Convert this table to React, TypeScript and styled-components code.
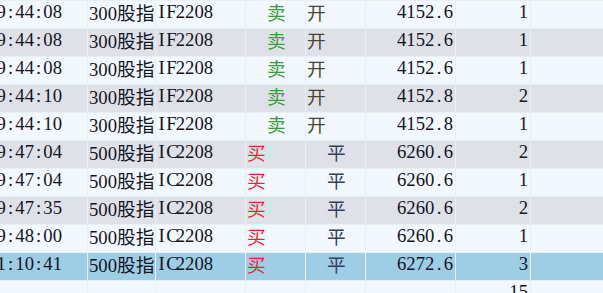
import React from "react";
import styled, { createGlobalStyle } from "styled-components";

const Global = createGlobalStyle`
  html, body { margin: 0; padding: 0; background: #f2f8ff; overflow: hidden; }
  body { width: 603px; height: 293px; }
`;

type Row = {
  time: string;
  name: string;
  code: string;
  side: "买" | "卖";
  open: "开" | "平";
  price: string;
  qty: string;
};

const rows: Row[] = [
  { time: "09:44:08", name: "300股指", code: "IF2208", side: "卖", open: "开", price: "4152.6", qty: "1" },
  { time: "09:44:08", name: "300股指", code: "IF2208", side: "卖", open: "开", price: "4152.6", qty: "1" },
  { time: "09:44:08", name: "300股指", code: "IF2208", side: "卖", open: "开", price: "4152.6", qty: "1" },
  { time: "09:44:10", name: "300股指", code: "IF2208", side: "卖", open: "开", price: "4152.8", qty: "2" },
  { time: "09:44:10", name: "300股指", code: "IF2208", side: "卖", open: "开", price: "4152.8", qty: "1" },
  { time: "09:47:04", name: "500股指", code: "IC2208", side: "买", open: "平", price: "6260.6", qty: "2" },
  { time: "09:47:04", name: "500股指", code: "IC2208", side: "买", open: "平", price: "6260.6", qty: "1" },
  { time: "09:47:35", name: "500股指", code: "IC2208", side: "买", open: "平", price: "6260.6", qty: "2" },
  { time: "09:48:00", name: "500股指", code: "IC2208", side: "买", open: "平", price: "6260.6", qty: "1" },
  { time: "11:10:41", name: "500股指", code: "IC2208", side: "买", open: "平", price: "6272.6", qty: "3" },
];

const Table = styled.div`
  width: 603px;
  height: 293px;
  overflow: hidden;
  background: #ebeef2;
  display: flex;
  flex-direction: column;
  gap: 1px;
  padding-top: 1px;
  box-sizing: border-box;
  font-family: "Liberation Serif", "Noto Sans CJK SC", serif;
  font-size: 18.7px;
  color: #14141e;
`;

const RowBox = styled.div<{ $tone: "light" | "gray" | "sel" }>`
  display: grid;
  grid-template-columns: 87px 67px 89px 59px 59px 89px 74px 1fr;
  column-gap: 1px;
  height: 27px;
  flex: none;
  > * {
    background: ${(p) =>
      p.$tone === "sel" ? "#9ecde6" : p.$tone === "gray" ? "#dee2e8" : "#f2f8ff"};
  }
`;

const Cell = styled.div<{ $align?: "left" | "right"; $indent?: number }>`
  display: flex;
  justify-content: ${(p) => (p.$align === "right" ? "flex-end" : "flex-start")};
  overflow: hidden;
  white-space: nowrap;
  height: 27px;
  line-height: 22px;
  padding: 0 ${(p) => (p.$align === "right" ? "2px" : "0")} 5px
    ${(p) => (p.$align === "right" ? "0" : `${1 + (p.$indent ?? 0)}px`)};
  box-sizing: border-box;
`;

const TimeCell = styled(Cell)`
  justify-content: flex-end;
  padding-right: 25px;
`;

const Cjk = styled.span<{ $color?: string }>`
  font-family: "Noto Sans CJK SC", sans-serif;
  color: ${(p) => p.$color ?? "inherit"};
`;

const Half = styled.span`
  display: inline-block;
  width: 0.5em;
  text-align: center;
`;

/* Renders text with SimSun-like metrics: half-width ASCII cells, full-width CJK */
const Txt = ({ value, color }: { value: string; color?: string }) => {
  const parts: React.ReactNode[] = [];
  let cjk = "";
  const flush = () => {
    if (cjk) {
      parts.push(
        <Cjk key={parts.length} $color={color}>
          {cjk}
        </Cjk>
      );
      cjk = "";
    }
  };
  for (const ch of value) {
    if (ch.charCodeAt(0) < 128) {
      flush();
      parts.push(<Half key={parts.length}>{ch}</Half>);
    } else {
      cjk += ch;
    }
  }
  flush();
  return <span>{parts}</span>;
};

export default function App() {
  return (
    <>
      <Global />
      <Table>
        {rows.map((r, i) => (
          <RowBox key={i} $tone={i === rows.length - 1 ? "sel" : i % 2 ? "gray" : "light"}>
            <TimeCell>
              <Txt value={r.time} />
            </TimeCell>
            <Cell>
              <Txt value={r.name} />
            </Cell>
            <Cell>
              <Txt value={r.code} />
            </Cell>
            <Cell $indent={r.side === "卖" ? 20 : 0}>
              <Txt value={r.side} color={r.side === "卖" ? "#3a9c3a" : "#f0202a"} />
            </Cell>
            <Cell $indent={r.open === "平" ? 20 : 0}>
              <Txt value={r.open} color={r.open === "平" ? "#34405a" : "#4e4634"} />
            </Cell>
            <Cell $align="right">
              <Txt value={r.price} />
            </Cell>
            <Cell $align="right">
              <Txt value={r.qty} />
            </Cell>
            <Cell />
          </RowBox>
        ))}
        <RowBox $tone="light">
          <Cell />
          <Cell />
          <Cell />
          <Cell />
          <Cell />
          <Cell />
          <Cell $align="right">
            <Txt value="15" />
          </Cell>
          <Cell />
        </RowBox>
      </Table>
    </>
  );
}
